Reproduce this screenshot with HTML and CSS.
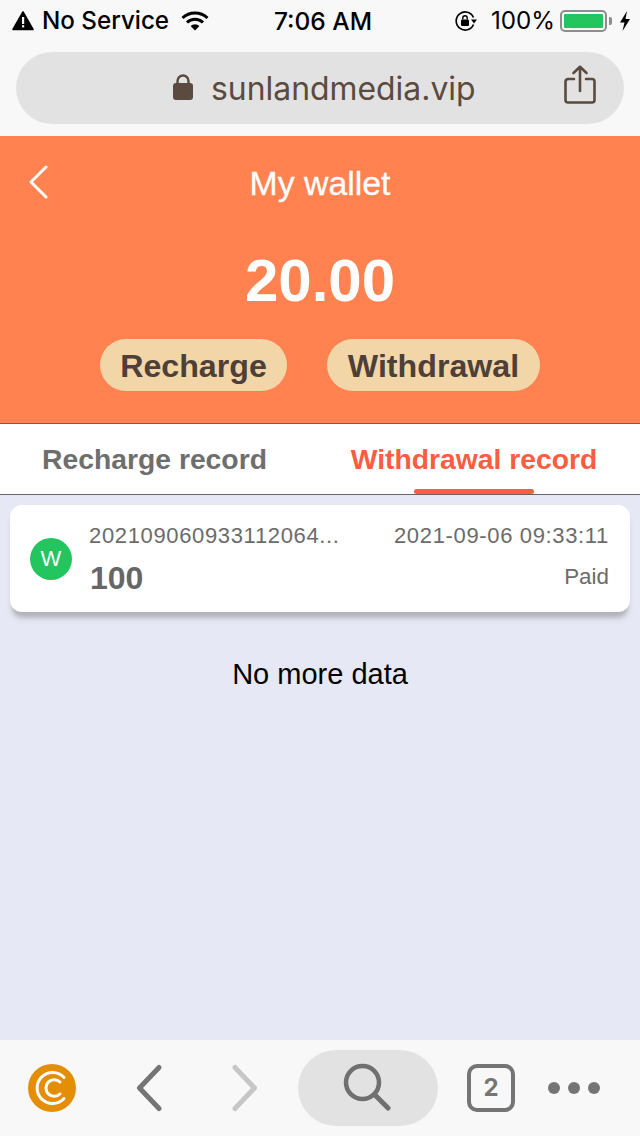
FILE: index.html
```html
<!DOCTYPE html>
<html lang="en">
<head>
<meta charset="utf-8">
<title>My wallet</title>
<link rel="stylesheet" href="styles.css">
</head>
<body>
<div class="app">
  <header class="browser-top">
    <div class="status">
      <div class="status-left">
        <svg class="ico-warn" viewBox="0 0 22 20"><path d="M11 1 L21 18.5 H1 Z" fill="#000" stroke="#000" stroke-width="1.6" stroke-linejoin="round"/><rect x="10" y="6" width="2.2" height="7" fill="#f8f8f8"/><rect x="10" y="14.2" width="2.2" height="2.2" fill="#f8f8f8"/></svg>
        <span class="status-text no-service">No Service</span>
        <svg class="ico-wifi" viewBox="0 0 28 20"><path d="M1.5 7 A18 18 0 0 1 26.5 7" fill="none" stroke="#000" stroke-width="3"/><path d="M6 11.5 A11.5 11.5 0 0 1 22 11.5" fill="none" stroke="#000" stroke-width="3"/><path d="M14 19.5 L9.6 15 A6.5 6.5 0 0 1 18.4 15 Z" fill="#000"/></svg>
      </div>
      <div class="status-time">7:06 AM</div>
      <div class="status-right">
        <svg class="ico-lock-rot" viewBox="0 0 24 22"><path d="M19.5 7.5 A9 9 0 1 0 19.5 14.5" fill="none" stroke="#000" stroke-width="1.7"/><path d="M17 9.5 h6 l-3 4 z" fill="#000"/><rect x="7" y="9.5" width="8" height="6.5" rx="1" fill="#000"/><path d="M8.8 9.5 V8 a2.2 2.2 0 0 1 4.4 0 V9.5" fill="none" stroke="#000" stroke-width="1.4"/></svg>
        <span class="status-text batt-text">100%</span>
        <div class="battery"><div class="battery-fill"></div></div>
        <div class="battery-cap"></div>
        <svg class="ico-bolt" viewBox="0 0 12 20"><path d="M8 0 L1 11.5 H5.5 L3.5 20 L11 8 H6.5 Z" fill="#000"/></svg>
      </div>
    </div>
    <div class="url-row">
      <div class="url-pill">
        <div class="url-center">
          <svg class="ico-padlock" viewBox="0 0 20 26"><rect x="0" y="9" width="20" height="17" rx="3" fill="#5a4a40"/><path d="M4.5 10 V7 a5.5 5.5 0 0 1 11 0 V10" fill="none" stroke="#5a4a40" stroke-width="2.4"/></svg>
          <span class="url-text">sunlandmedia.vip</span>
        </div>
        <svg class="ico-share" viewBox="0 0 32 40"><path d="M10 14 H4 a2.5 2.5 0 0 0 -2.5 2.5 V35 a2.5 2.5 0 0 0 2.5 2.5 H28 a2.5 2.5 0 0 0 2.5 -2.5 V16.5 a2.5 2.5 0 0 0 -2.5 -2.5 H22 M16 26 V2 M9.5 8 L16 1.8 L22.5 8" fill="none" stroke="#5a4a40" stroke-width="2.6" stroke-linecap="round" stroke-linejoin="round"/></svg>
      </div>
    </div>
  </header>

  <section class="hero">
    <div class="nav">
      <svg class="ico-back" viewBox="0 0 20 34"><path d="M18 2 L3 17 L18 32" fill="none" stroke="#fff" stroke-width="3" stroke-linecap="round" stroke-linejoin="round"/></svg>
      <h1 class="title">My wallet</h1>
    </div>
    <div class="amount">20.00</div>
    <div class="actions">
      <button class="pill pill-recharge">Recharge</button>
      <button class="pill pill-withdraw">Withdrawal</button>
    </div>
  </section>

  <nav class="tabs">
    <div class="tab">Recharge record</div>
    <div class="tab tab-active">Withdrawal record<span class="tab-bar"></span></div>
  </nav>

  <main class="content">
    <article class="card">
      <div class="badge">W</div>
      <div class="card-body">
        <div class="card-row">
          <span class="order">202109060933112064...</span>
          <span class="meta">2021-09-06 09:33:11</span>
        </div>
        <div class="card-row card-row-low">
          <span class="value">100</span>
          <span class="status-label">Paid</span>
        </div>
      </div>
    </article>
    <p class="no-more">No more data</p>
  </main>

  <footer class="browser-bottom">
    <svg class="ico-coin" viewBox="0 0 48 48"><circle cx="24" cy="24" r="24" fill="#e48e06"/><path d="M36 13.5 A15.5 15.5 0 1 0 36 34.5" fill="none" stroke="#fff" stroke-width="3" stroke-linecap="round"/><path d="M32 18 A8.3 8.3 0 1 0 32 30" fill="none" stroke="#fff" stroke-width="3" stroke-linecap="round"/></svg>
    <svg class="ico-nav" viewBox="0 0 28 48"><path d="M24 3.5 L4.5 24 L24 44.5" fill="none" stroke="#757575" stroke-width="5" stroke-linecap="round" stroke-linejoin="round"/></svg>
    <svg class="ico-nav ico-next" viewBox="0 0 28 48"><path d="M4 3.5 L23.5 24 L4 44.5" fill="none" stroke="#c6c6c6" stroke-width="5" stroke-linecap="round" stroke-linejoin="round"/></svg>
    <div class="search-pill">
      <svg class="ico-search" viewBox="0 0 48 48"><circle cx="19.5" cy="19.5" r="16.5" fill="none" stroke="#707070" stroke-width="4.5"/><path d="M31.5 31.5 L45 45" stroke="#707070" stroke-width="5" stroke-linecap="round"/></svg>
    </div>
    <div class="tabs-count">2</div>
    <div class="dots"><span class="dot"></span><span class="dot"></span><span class="dot"></span></div>
  </footer>
</div>
</body>
</html>
```

FILE: styles.css
```css
* { box-sizing: border-box; }
html, body { margin: 0; padding: 0; }
body { width: 640px; height: 1136px; overflow: hidden; font-family: "Liberation Sans", Arial, sans-serif; background: #e6e8f5; }
.app { display: flex; flex-direction: column; width: 640px; height: 1136px; }

.browser-top { height: 136px; background: #f8f8f8; display: flex; flex-direction: column; flex: none; }
.status { height: 40px; padding: 0 9px 0 12px; display: grid; grid-template-columns: 1fr auto 1fr; align-items: center; color: #000; margin-top: 1px; }
.status-left { display: flex; align-items: center; }
.status-right { display: flex; align-items: center; justify-content: flex-end; }
.status-text, .status-time { font-family: Inter, "Liberation Sans", sans-serif; font-size: 24.2px; line-height: 40px; }
.no-service { font-weight: 500; margin-left: 8px; }
.status-time { font-weight: 500; font-size: 24.5px; margin-left: 3px; }
.batt-text { margin-left: 13px; font-weight: 400; }
.ico-warn { width: 22px; height: 20px; }
.ico-wifi { width: 28px; height: 20px; margin-left: 12px; }
.ico-lock-rot { width: 24px; height: 22px; }
.battery { width: 47px; height: 22px; margin-left: 5px; border: 2px solid #8e8e8e; border-radius: 5px; padding: 2px; }
.battery-fill { height: 100%; background: #22c55e; border-radius: 1px; }
.battery-cap { width: 3px; height: 8px; background: #8e8e8e; border-radius: 0 2px 2px 0; margin-left: 2px; }
.ico-bolt { width: 12px; height: 20px; margin-left: 7px; }

.url-row { padding: 11px 16px 0; }
.url-pill { height: 72px; border-radius: 36px; background: #e2e2e2; display: flex; align-items: center; justify-content: space-between; padding: 0 28px 0 157px; }
.url-center { display: flex; align-items: center; }
.ico-padlock { width: 20px; height: 26px; margin-top: -2px; }
.url-text { font-family: Inter, "Liberation Sans", sans-serif; font-size: 31.9px; color: #5a4a40; margin-left: 18px; }
.ico-share { width: 32px; height: 40px; margin-top: -6px; }

.hero { height: 288px; background: #ff8250; flex: none; display: flex; flex-direction: column; align-items: center; border-bottom: 1px solid #6e6259; }
.nav { width: 100%; height: 94px; display: flex; align-items: center; justify-content: center; position: relative; }
.ico-back { position: absolute; left: 28px; top: 29px; width: 20px; height: 34px; }
.title { margin: 0; font-size: 33.8px; font-weight: 400; color: #fff; line-height: 94px; -webkit-text-stroke: 0.3px #fff; }
.amount { font-size: 60px; font-weight: 700; color: #fff; line-height: 64px; margin-top: 19px; }
.actions { display: flex; gap: 40px; margin-top: 26px; }
.pill { height: 52px; border: 0; border-radius: 26px; background: #f2d6a8; color: #4e4038; font: 700 32.2px "Liberation Sans", Arial, sans-serif; padding: 2px 0 0; }
.pill-recharge { width: 187px; }
.pill-withdraw { width: 213px; }

.tabs { height: 71px; flex: none; background: #fff; display: grid; grid-template-columns: 1fr 1fr; border-bottom: 1px solid #666; }
.tab { position: relative; display: flex; align-items: center; justify-content: center; font-size: 28.3px; font-weight: 700; color: #6e6e6e; padding: 0 11px 0 0; }
.tab-active { color: #fa5d3f; padding-right: 0; margin-left: -6px; margin-right: 6px; }
.tab-bar { position: absolute; left: 100px; bottom: 0; width: 120px; height: 5px; background: #fa5d3f; border-radius: 3px; }

.content { flex: 1; display: flex; flex-direction: column; padding: 10px 10px 0; background: #e6e8f5; }
.card { height: 107px; background: #fff; border-radius: 12px; display: flex; align-items: center; padding: 0 21px 0 20px; box-shadow: 0 8px 5px -2px rgba(130,130,130,.5); }
.badge { width: 42px; height: 42px; flex: none; border-radius: 50%; background: #22c55e; color: #fff; display: flex; align-items: center; justify-content: center; font-size: 22px; }
.card-body { flex: 1; margin: 2px 0 0 17px; display: flex; flex-direction: column; }
.card-row { display: flex; justify-content: space-between; align-items: center; }
.card-row-low { margin-top: 7px; }
.order, .meta { font-size: 22px; letter-spacing: .65px; color: #6b6b6b; line-height: 28px; }
.status-label { font-size: 22.4px; color: #6b6b6b; line-height: 28px; }
.value { font-size: 32px; font-weight: 700; color: #666; line-height: 40px; margin: 1px 0 -1px 1px; }
.no-more { margin: 43px 0 0; text-align: center; font-size: 29px; line-height: 38px; color: #000; }

.browser-bottom { height: 96px; flex: none; background: #f8f8f8; display: flex; align-items: center; padding: 0 28px; }
.ico-coin { width: 48px; height: 48px; flex: none; margin-top: -1px; }
.ico-nav { width: 28px; height: 48px; flex: none; margin-left: 59px; margin-top: -1px; }
.ico-next { margin-left: 68px; }
.search-pill { width: 140px; height: 76px; border-radius: 38px; background: #e2e2e2; display: flex; align-items: center; justify-content: center; margin-left: 39px; margin-top: -1px; flex: none; }
.ico-search { width: 48px; height: 48px; margin-top: -1px; margin-left: -2px; }
.tabs-count { width: 48px; height: 48px; border: 4.5px solid #757575; border-radius: 10px; color: #757575; font-size: 24px; font-weight: 700; display: flex; align-items: center; justify-content: center; margin-left: 29px; flex: none; font-family: Inter, "Liberation Sans", sans-serif; margin-top: -1px; }
.dots { display: flex; gap: 8px; margin-left: 33px; margin-top: -1px; }
.dot { width: 12px; height: 12px; border-radius: 50%; background: #757575; }
```
